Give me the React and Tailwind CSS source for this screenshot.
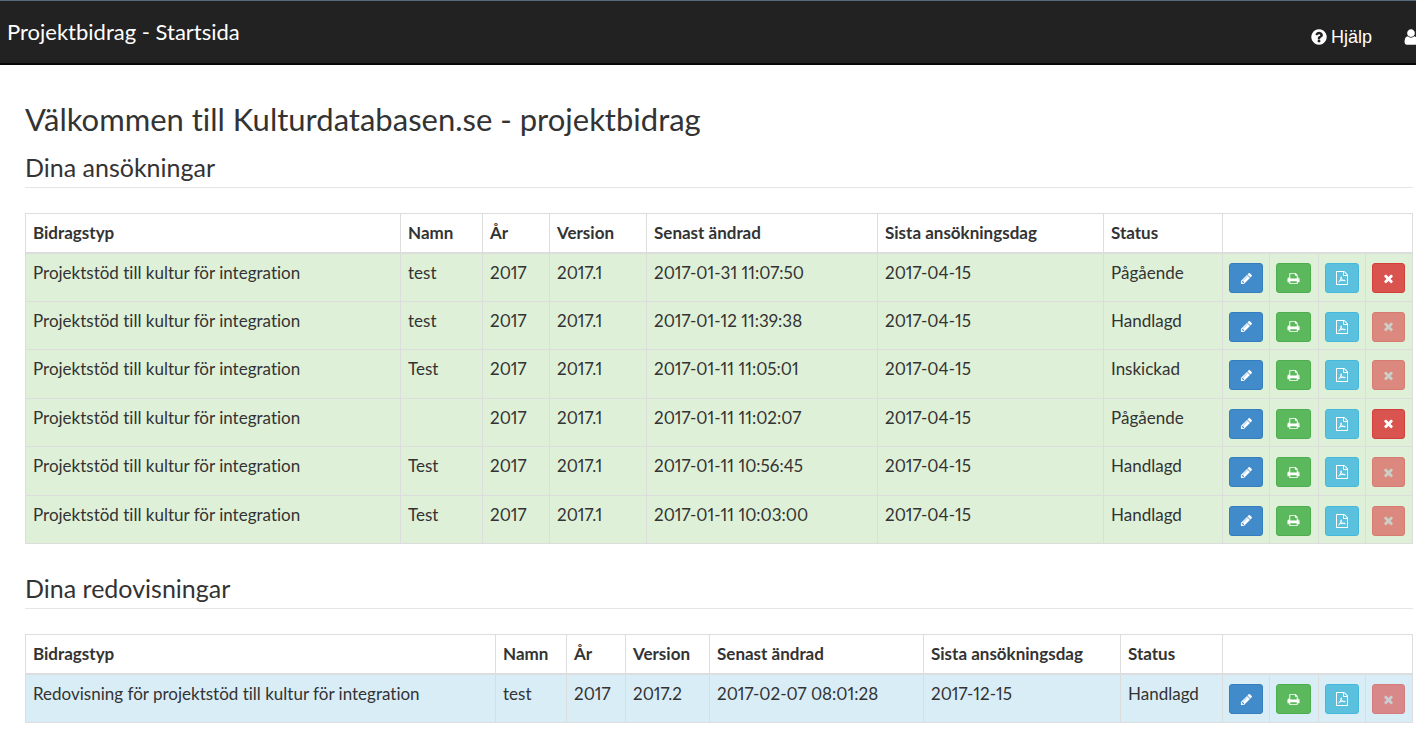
const icons = {
  pencil:
    'M491 1536l91-91-235-235-91 91v107h128v128h107zm523-928q0-22-22-22-10 0-17 7l-542 542q-7 7-7 17 0 22 22 22 10 0 17-7l542-542q7-7 7-17zm-54-192l416 416-832 832h-416v-416zm683 96q0 53-37 90l-166 166-416-416 166-165q36-38 90-38 53 0 91 38l235 234q37 39 37 91z',
  print:
    'M448 1536h896v-256h-896v256zm0-640h896v-384h-160q-40 0-68-28t-28-68v-160h-640v640zm1152 64q0-26-19-45t-45-19-45 19-19 45 19 45 45 19 45-19 19-45zm128 0v416q0 13-9.5 22.5t-22.5 9.5h-224v160q0 40-28 68t-68 28h-960q-40 0-68-28t-28-68v-160h-224q-13 0-22.5-9.5t-9.5-22.5v-416q0-79 56.5-135.5t135.5-56.5h64v-544q0-40 28-68t68-28h672q40 0 88 20t76 48l152 152q28 28 48 76t20 88v256h64q79 0 135.5 56.5t56.5 135.5z',
  pdf:
    'M1596 380q28 28 48 76t20 88v1152q0 40-28 68t-68 28h-1344q-40 0-68-28t-28-68v-1600q0-40 28-68t68-28h896q40 0 88 20t76 48zm-444-244v376h376q-10-29-22-41l-313-313q-12-12-41-22zm384 1528v-1024h-416q-40 0-68-28t-28-68v-416h-768v1536h1280z',
  times:
    'M1490 1322q0 40-28 68l-136 136q-28 28-68 28t-68-28l-294-294-294 294q-28 28-68 28t-68-28l-136-136q-28-28-28-68t28-68l294-294-294-294q-28-28-28-68t28-68l136-136q28-28 68-28t68 28l294 294 294-294q28-28 68-28t68 28l136 136q28 28 28 68t-28 68l-294 294 294 294q28 28 28 68z',
  help:
    'M1024 1376v-192q0-14-9-23t-23-9h-192q-14 0-23 9t-9 23v192q0 14 9 23t23 9h192q14 0 23-9t9-23zm256-672q0-88-55.5-163t-138.5-116-170-41q-243 0-371 213-15 24 8 42l132 100q7 6 19 6 16 0 25-12 53-68 86-92 34-24 86-24 48 0 85.5 26t37.5 59q0 38-20 61t-68 45q-63 28-115.5 86.5t-52.5 125.5v36q0 14 9 23t23 9h192q14 0 23-9t9-23q0-19 21.5-49.5t54.5-49.5q32-18 49-28.5t46-35 44.5-48 28-60.5 12.5-81zm384 192q0 209-103 385.5t-279.5 279.5-385.5 103-385.5-103-279.5-279.5-103-385.5 103-385.5 279.5-279.5 385.5-103 385.5 103 279.5 279.5 103 385.5z',
  user:
    'M1536 1399q0 109-62.5 187t-150.5 78h-854q-88 0-150.5-78t-62.5-187q0-85 8.5-160.5t31.5-152 58.5-131 94-89 134.5-34.5q131 128 313 128t313-128q76 0 134.5 34.5t94 89 58.5 131 31.5 152 8.5 160.5zm-256-887q0 159-112.5 271.5t-271.5 112.5-271.5-112.5-112.5-271.5 112.5-271.5 271.5-112.5 271.5 112.5 112.5 271.5z',
};

function Icon({ name, className }) {
  return (
    <svg viewBox="0 0 1792 1792" fill="currentColor" className={className} aria-hidden="true">
      <path d={icons[name]} />
      {name === 'pdf' && (
        <path
          d="M430 1440q110-50 230-260 130-230 150-430-50-30-50 60 20 200 170 340 150 110 390 100-60-100-330-60-270 30-430 110"
          fill="none"
          stroke="currentColor"
          strokeWidth="120"
        />
      )}
    </svg>
  );
}

const actions = [
  { icon: 'pencil', label: 'Redigera', width: 'w-[34px]', color: 'bg-[#428bca] border-[#357ebd]' },
  { icon: 'print', label: 'Skriv ut', width: 'w-[35px]', color: 'bg-[#5cb85c] border-[#4cae4c]' },
  { icon: 'pdf', label: 'Visa PDF', width: 'w-[34px]', color: 'bg-[#5bc0de] border-[#46b8da]' },
  { icon: 'times', label: 'Ta bort', width: 'w-[33px]', color: 'bg-[#d9534f] border-[#d43f3a]' },
];

const headers = ['Bidragstyp', 'Namn', 'År', 'Version', 'Senast ändrad', 'Sista ansökningsdag', 'Status'];

const type = 'Projektstöd till kultur för integration';
const applications = [
  { cells: [type, 'test', '2017', '2017.1', '2017-01-31 11:07:50', '2017-04-15', 'Pågående'], removable: true },
  { cells: [type, 'test', '2017', '2017.1', '2017-01-12 11:39:38', '2017-04-15', 'Handlagd'] },
  { cells: [type, 'Test', '2017', '2017.1', '2017-01-11 11:05:01', '2017-04-15', 'Inskickad'] },
  { cells: [type, '', '2017', '2017.1', '2017-01-11 11:02:07', '2017-04-15', 'Pågående'], removable: true },
  { cells: [type, 'Test', '2017', '2017.1', '2017-01-11 10:56:45', '2017-04-15', 'Handlagd'] },
  { cells: [type, 'Test', '2017', '2017.1', '2017-01-11 10:03:00', '2017-04-15', 'Handlagd'] },
];

const reports = [
  {
    cells: [
      'Redovisning för projektstöd till kultur för integration',
      'test',
      '2017',
      '2017.2',
      '2017-02-07 08:01:28',
      '2017-12-15',
      'Handlagd',
    ],
  },
];

const actionCols = ['w-[47px]', 'w-[49px]', 'w-[47px]', 'w-[47px]'];

function ProjectTable({ rows, cols, color, label }) {
  return (
    <table
      aria-label={label}
      className="w-full table-fixed border-collapse border border-[#ddd] text-[17px] leading-6"
    >
      <colgroup>
        <col />
        {[...cols, ...actionCols].map((width, i) => (
          <col key={i} className={width} />
        ))}
      </colgroup>
      <thead>
        <tr className="h-[39px]">
          {headers.map((header) => (
            <th key={header} className="border border-b-2 border-[#ddd] px-[7px] text-left font-bold whitespace-nowrap">
              {header}
            </th>
          ))}
          <td colSpan={4} className="border border-b-2 border-[#ddd]" />
        </tr>
      </thead>
      <tbody className={color}>
        {rows.map((row, r) => (
          <tr key={r} className="h-[49px] even:h-12">
            {row.cells.map((cell, i) => (
              <td key={i} className="border border-[#ddd] px-[7px] pt-[7px] align-top whitespace-nowrap">
                {cell}
              </td>
            ))}
            {actions.map((action) => (
              <td key={action.icon} className="border border-[#ddd] px-[6px] pt-[2px] align-middle">
                <button
                  type="button"
                  aria-label={action.label}
                  disabled={action.icon === 'times' && !row.removable}
                  className={`flex h-[30px] items-center justify-center rounded-[3px] border text-white disabled:opacity-65 disabled:text-[#c0c0c0] ${action.width} ${action.color}`}
                >
                  <Icon name={action.icon} className={action.icon === 'pdf' ? 'size-[14px]' : 'size-[13px]'} />
                </button>
              </td>
            ))}
          </tr>
        ))}
      </tbody>
    </table>
  );
}

function SectionTitle({ children }) {
  return <h2 className="mb-[25px] border-b border-[#e5e5e5] pb-[3px] text-[25px] leading-[33px]">{children}</h2>;
}

export default function App() {
  return (
    <div className="overflow-x-hidden bg-white font-['Lato',sans-serif] text-[#333] proportional-nums [font-variant-ligatures:none]">
      <header className="flex h-[65px] items-center justify-between border-t border-b-2 border-t-[#56697a] border-b-[#080808] bg-[#222] pl-[7px] text-white">
        <a href="#" className="text-[22px] leading-8">
          Projektbidrag - Startsida
        </a>
        <nav className="-mr-1 flex items-center gap-[30px] pt-[10px] font-['Liberation_Sans',sans-serif] text-lg">
          <a href="#" className="flex items-center gap-[3px]">
            <Icon name="help" className="size-[18px]" />
            Hjälp
          </a>
          <a href="#" aria-label="Konto">
            <Icon name="user" className="size-[18px]" />
          </a>
        </nav>
      </header>

      <main className="pt-9 pr-[3px] pl-[25px]">
        <h1 className="mb-[14px] text-[31px] leading-9">Välkommen till Kulturdatabasen.se - projektbidrag</h1>

        <SectionTitle>Dina ansökningar</SectionTitle>
        <ProjectTable
          label="Dina ansökningar"
          rows={applications}
          cols={['w-[82px]', 'w-[67px]', 'w-[97px]', 'w-[231px]', 'w-[226px]', 'w-[119px]']}
          color="bg-[#dff0d8]"
        />

        <div className="h-7" />
        <SectionTitle>Dina redovisningar</SectionTitle>
        <ProjectTable
          label="Dina redovisningar"
          rows={reports}
          cols={['w-[71px]', 'w-[59px]', 'w-[84px]', 'w-[214px]', 'w-[197px]', 'w-[102px]']}
          color="bg-[#d9edf7]"
        />
      </main>
    </div>
  );
}
